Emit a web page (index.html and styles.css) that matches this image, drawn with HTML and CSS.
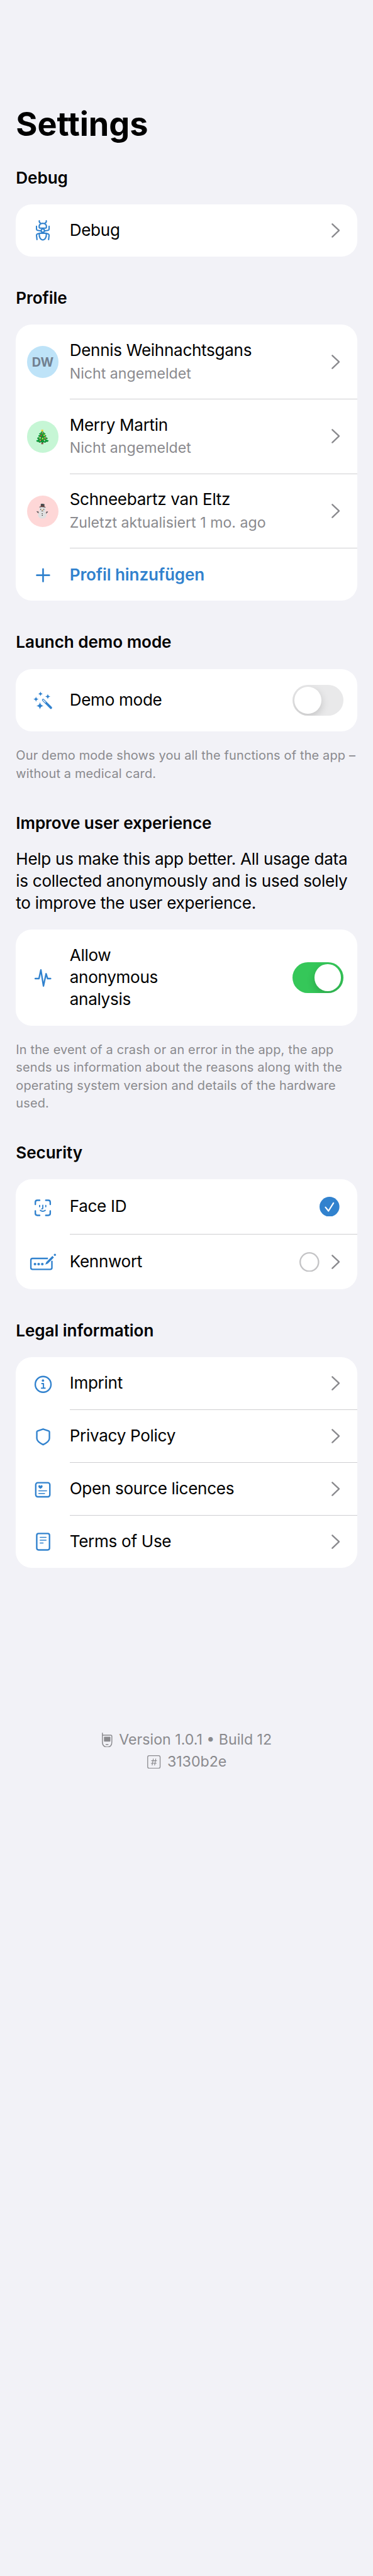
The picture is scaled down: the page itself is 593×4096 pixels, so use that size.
FILE: index.html
```
<!DOCTYPE html>
<html lang="en">
<head>
<meta charset="utf-8">
<title>Settings</title>
<link rel="stylesheet" href="styles.css">
</head>
<body>
<svg class="defs" aria-hidden="true">
  <symbol id="chevron" viewBox="0 0 17 29"><path d="M1.7 1.7 15.2 14.5 1.7 27.3" fill="none" stroke="#8a8a8e" stroke-width="3" stroke-linecap="round" stroke-linejoin="round"/></symbol>
</svg>
<main class="page">
  <h1 class="title">Settings</h1>

  <section class="section first">
    <h2 class="heading">Debug</h2>
    <div class="card">
      <div class="row">
        <svg class="icon" viewBox="0 0 64 64"><g transform="translate(2 -.5) scale(.3333)" stroke-width="8">
          <path d="M68 40q-2 9 8 14M110 40q2 9-8 14M67 76q0-21 22-21t22 21q0 8-8 8H75q-8 0-8-8z"/>
          <circle cx="89" cy="99" r="10"/>
          <path d="M51 73v17q0 6 6 7l22 4M127 73v17q0 6-6 7l-22 4M54 153l-3-26q0-7 7-9l11-3h40l11 3q7 2 7 9l-3 26M68 116q-2 18 5 29 6 10 16 10t16-10q7-11 5-29"/>
        </g></svg>
        <div class="content"><span class="label">Debug</span><svg class="chevron"><use href="#chevron"/></svg></div>
      </div>
    </div>
  </section>

  <section class="section">
    <h2 class="heading">Profile</h2>
    <div class="card">
      <div class="row profile">
        <div class="avatar blue">DW</div>
        <div class="content line"><div class="stack"><span class="label">Dennis Weihnachtsgans</span><span class="sub">Nicht angemeldet</span></div><svg class="chevron"><use href="#chevron"/></svg></div>
      </div>
      <div class="row profile">
        <div class="avatar green"><span class="emoji">🎄</span></div>
        <div class="content line"><div class="stack"><span class="label">Merry Martin</span><span class="sub">Nicht angemeldet</span></div><svg class="chevron"><use href="#chevron"/></svg></div>
      </div>
      <div class="row profile">
        <div class="avatar red"><span class="emoji">⛄</span></div>
        <div class="content line"><div class="stack"><span class="label">Schneebartz van Eltz</span><span class="sub">Zuletzt aktualisiert 1 mo. ago</span></div><svg class="chevron"><use href="#chevron"/></svg></div>
      </div>
      <div class="row">
        <svg class="icon" viewBox="0 0 64 64"><path stroke-width="3.4" d="M32.2 20v25M19.7 32.5h25"/></svg>
        <div class="content"><span class="label action">Profil hinzufügen</span></div>
      </div>
    </div>
  </section>

  <section class="section">
    <h2 class="heading">Launch demo mode</h2>
    <div class="card">
      <div class="row demo">
        <svg class="icon" viewBox="0 0 64 64"><g transform="translate(2 1) scale(.3333)">
          <path class="solid" d="M75 41q2 12 14 14-12 2-14 14-2-12-14-14 12-2 14-14zM119 55q2 14 16 16-14 2-16 16-2-14-16-16 14-2 16-16zM48 71q2 14 16 16-14 2-16 16-2-14-16-16 14-2 16-16zM72 105q3 19 22 22-19 3-22 22-3-19-22-22 19-3 22-22z"/>
          <path d="M91 92l47 47" stroke-width="14"/><path d="M91 92l14 14" stroke="#fff" stroke-width="4.5"/>
        </g></svg>
        <div class="content wide"><span class="label">Demo mode</span><span class="switch"><i class="knob"></i></span></div>
      </div>
    </div>
    <p class="note">Our demo mode shows you all the functions of the app –<br>without a medical card.</p>
  </section>

  <section class="section after-note">
    <h2 class="heading">Improve user experience</h2>
    <p class="intro">Help us make this app better. All usage data<br>is collected anonymously and is used solely<br>to improve the user experience.</p>
    <div class="card">
      <div class="row analysis">
        <svg class="icon" viewBox="0 0 64 64"><path stroke-width="3" d="M16.5 34.2H24l3.8-17.5L33 49l5.3-24.6 3 9.8h6"/></svg>
        <div class="content wide"><span class="label">Allow<br>anonymous<br>analysis</span><span class="switch on"><i class="knob"></i></span></div>
      </div>
    </div>
    <p class="note">In the event of a crash or an error in the app, the app<br>sends us information about the reasons along with the<br>operating system version and details of the hardware<br>used.</p>
  </section>

  <section class="section after-note">
    <h2 class="heading">Security</h2>
    <div class="card">
      <div class="row security">
        <svg class="icon" viewBox="0 0 64 64"><g transform="translate(-2 7) scale(.3333)" stroke-width="9">
          <path d="M56 59V46q0-12 12-12h14M119 34h15q12 0 12 12v13M146 98v15q0 12-12 12h-15M82 125H68q-12 0-12-12V98"/>
          <path stroke-width="7" d="M82 65v8M119 65v8M101 64v17q0 5-6 5M86 95q15 11 30 0"/>
        </g></svg>
        <div class="content line"><span class="label">Face ID</span>
          <svg class="radio" viewBox="0 0 40 40"><circle class="solid" cx="20" cy="20" r="20"/><path d="M12 21l6 7.500 10-16" stroke="#fff" stroke-width="2.800"/></svg></div>
      </div>
      <div class="row security last">
        <svg class="icon" viewBox="0 0 64 64"><g transform="translate(-2 -104) scale(.3333)" stroke-width="9">
          <path stroke-linecap="butt" d="M132 388H39q-10 0-10 10v46q0 10 10 10h107q10 0 10-10v-42"/>
          <path class="solid" d="M116 425l6-15 37-37 9 9-37 37z"/>
          <circle class="solid" cx="174" cy="366" r="6.500"/><circle class="solid" cx="54" cy="422" r="8"/><circle class="solid" cx="76" cy="422" r="8"/><circle class="solid" cx="98" cy="422" r="8"/>
        </g></svg>
        <div class="content"><span class="label">Kennwort</span>
          <svg class="radio" viewBox="0 0 40 40"><circle cx="20" cy="20" r="18.500" stroke="#c4c4c6" stroke-width="3"/></svg>
          <svg class="chevron next"><use href="#chevron"/></svg></div>
      </div>
    </div>
  </section>

  <section class="section">
    <h2 class="heading">Legal information</h2>
    <div class="card">
      <div class="row legal">
        <svg class="icon" viewBox="0 0 64 64"><g transform="translate(2 7.500) scale(.3333)" stroke-width="9">
          <circle cx="91" cy="77" r="47.500"/><circle class="solid" cx="90" cy="54" r="7"/>
          <path stroke-width="7.500" d="M83 72h10v27M81 100h22"/>
        </g></svg>
        <div class="content line"><span class="label">Imprint</span><svg class="chevron"><use href="#chevron"/></svg></div>
      </div>
      <div class="row legal">
        <svg class="icon" viewBox="0 0 64 64"><path transform="translate(2 -98.500) scale(.3333)" stroke-width="9" d="M91 346l34 12q4 1 4 6v38q0 12-10 20-10 9-28 18-18-9-28-18-10-8-10-20v-38q0-5 4-6z"/></svg>
        <div class="content line"><span class="label">Privacy Policy</span><svg class="chevron"><use href="#chevron"/></svg></div>
      </div>
      <div class="row legal">
        <svg class="icon" viewBox="0 0 64 64"><g transform="translate(2 -204.500) scale(.3333)" stroke-width="9">
          <rect x="46.500" y="669" width="85" height="85" rx="12"/>
          <path class="solid" d="M75 706q-13-8-13-15 0-7 6-7 5 0 7 5 2-5 7-5 6 0 6 7 0 7-13 15z"/>
          <path stroke-width="6" d="M65 718h47M65 734h35"/>
        </g></svg>
        <div class="content line"><span class="label">Open source licences</span><svg class="chevron"><use href="#chevron"/></svg></div>
      </div>
      <div class="row">
        <svg class="icon" viewBox="0 0 64 64"><g transform="translate(2 -310.500) scale(.3333)" stroke-width="9">
          <rect x="52.500" y="978.500" width="77" height="99" rx="11"/>
          <path stroke-width="6" d="M73 1002h36M73 1019h36M73 1036h18"/>
        </g></svg>
        <div class="content"><span class="label">Terms of Use</span><svg class="chevron"><use href="#chevron"/></svg></div>
      </div>
    </div>
  </section>

  <footer class="footer">
    <div class="info">
      <svg class="phone" viewBox="84 69 62 90"><path d="M86.500 72v52q0 32 29 32t28-32V91q0-7-7-7H87" fill="none" stroke="#8a8a8e" stroke-width="5.500" stroke-linecap="round"/><rect x="96" y="94" width="39" height="29" rx="3" fill="#8a8a8e"/><path d="M108 141h13" stroke="#8a8a8e" stroke-width="5" stroke-linecap="round"/></svg>
      <span>Version 1.0.1 • Build 12</span>
    </div>
    <div class="info">
      <svg class="hash" viewBox="351 204 81 82"><g fill="none" stroke="#8a8a8e" stroke-width="5" stroke-linecap="round"><rect x="353.500" y="206.500" width="76" height="77" rx="9"/><path stroke-width="4.500" d="M388 226l-7 38M403 226l-7 38M377 237h31M375 253h31"/></g></svg>
      <span>3130b2e</span>
    </div>
  </footer>
</main>
</body>
</html>
```
FILE: styles.css
```
/* 1rem = 5pt on the phone's 375pt-wide screen */
html { font-size: 7.91px; background: #f2f2f7; }
* { box-sizing: border-box; }
body { margin: 0; font-family: Inter, "Liberation Sans", sans-serif; color: #000; }
h1, h2, p { margin: 0; }
.defs { display: none; }

.page { min-height: 517.8rem; padding: 20.9rem 3.2rem 0; }
.title { font-size: 6.6rem; line-height: 8.2rem; font-weight: 700; letter-spacing: -0.007rem; }

.section { margin-top: 6.2rem; }
.section.first { margin-top: 4.5rem; }
.section.after-note { margin-top: 6rem; }
.heading { margin-bottom: 3.1rem; font-size: 3.3rem; line-height: 4.4rem; font-weight: 600; letter-spacing: -0.008rem; }
.intro { margin: -0.2rem 0 3.1rem; font-size: 3.3rem; line-height: 4.4rem; letter-spacing: -0.037rem; white-space: nowrap; }
.note { margin-top: 3rem; font-size: 2.52rem; line-height: 3.6rem; letter-spacing: 0.02rem; color: #8a8a8e; white-space: nowrap; }

.card { overflow: hidden; border-radius: 3.2rem; background: #fff; }
.row { display: flex; align-items: center; gap: 2.2rem; height: 10.5rem; padding-left: 2.2rem; }
.row.profile { height: 15rem; }
.row.demo { height: 12.6rem; }
.row.analysis { height: 19.3rem; }
.row.security { height: 11.1rem; }
.row.security.last { height: 11rem; }
.row.legal { height: 10.6rem; }

.icon { flex: none; width: 6.4rem; height: 6.4rem; overflow: visible; }
.icon, .radio { fill: none; stroke: #3182ce; stroke-linecap: round; stroke-linejoin: round; }
.solid { fill: #3182ce; stroke: none; }

.content { flex: 1; display: flex; align-items: center; align-self: stretch; padding-right: 3.5rem; }
.content.line { border-bottom: 1px solid #cfcfd1; }
.content.wide { padding-right: 2.8rem; }
.stack { flex: 1; display: flex; flex-direction: column; gap: 0.5rem; }
.label { flex: 1; font-size: 3.3rem; line-height: 4.4rem; letter-spacing: -0.039rem; white-space: nowrap; }
.label.action { color: #3182ce; font-weight: 600; letter-spacing: -0.014rem; }
.stack .label { flex: none; }
.sub { font-size: 2.93rem; line-height: 4rem; color: #8a8a8e; white-space: nowrap; }

.avatar { flex: none; display: flex; align-items: center; justify-content: center; width: 6.4rem; height: 6.4rem; border-radius: 50%; font-size: 2.52rem; font-weight: 700; color: #718090; }
.avatar.blue { background: #bee3f8; }
.avatar.green { background: #c6f6d5; }
.avatar.red { background: #fed7d7; }
.emoji { font-size: 2.7rem; line-height: 1; }

.chevron { flex: none; width: 1.7rem; height: 2.9rem; }
.chevron.next { margin-left: 2.4rem; }
.radio { flex: none; width: 4rem; height: 4rem; }

.switch { flex: none; display: flex; width: 10.2rem; height: 6.2rem; padding: 0.4rem; overflow: hidden; border-radius: 3.1rem; background: #e9e9ea; }
.switch.on { justify-content: flex-end; background: #35c759; }
.knob { width: 5.4rem; height: 5.4rem; border-radius: 50%; background: #fff; box-shadow: 0 0.6rem 1.6rem rgba(0, 0, 0, 0.17); }

.footer { display: flex; flex-direction: column; align-items: center; margin-top: 32.4rem; padding-left: 0.2rem; }
.info { display: flex; align-items: center; gap: 1.3rem; font-size: 2.93rem; line-height: 4.4rem; color: #8a8a8e; white-space: nowrap; }
.phone { width: 2.1rem; height: 3rem; }
.hash { width: 2.7rem; height: 2.7rem; }
```
